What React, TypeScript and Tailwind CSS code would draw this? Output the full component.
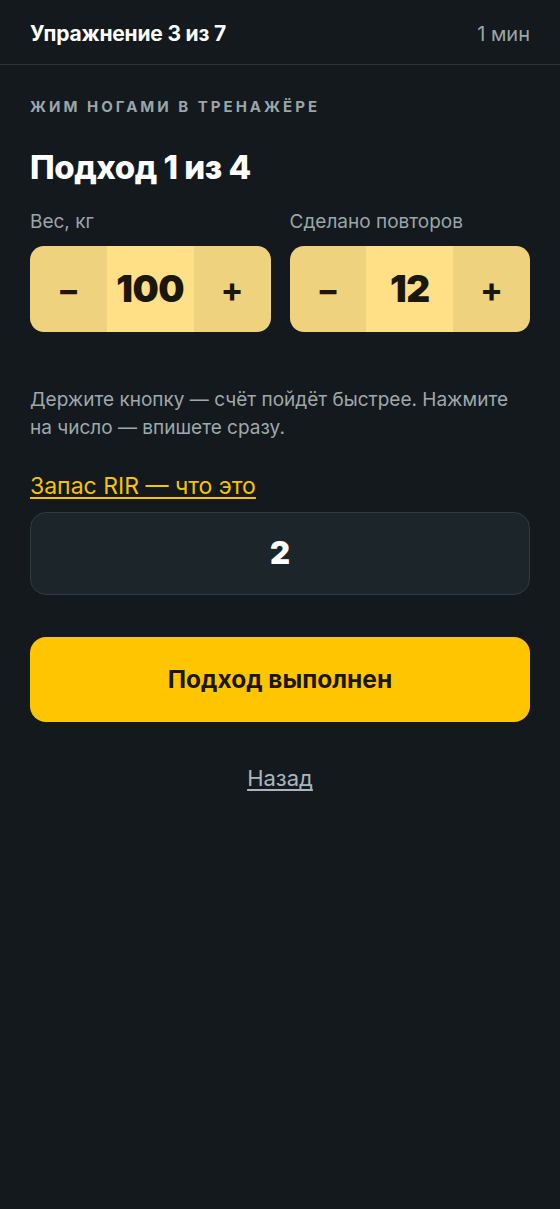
import { useState } from 'react';

const font = { fontFamily: 'Inter, "Noto Sans", sans-serif' };

function Stepper({ label, value, onChange }: { label: string; value: number; onChange: (v: number) => void }) {
  return (
    <div className="flex-1 min-w-0">
      <div className="text-[19px] leading-[24px] text-[#9aa6a9] mb-[12px]">{label}</div>
      <div className="grid grid-cols-[1fr_1.125fr_1fr] h-[86px] rounded-[14px] overflow-hidden text-[#1c170b]">
        <button
          onClick={() => onChange(value - 1)}
          className="bg-[#efd27e] flex items-center justify-center text-[34px] font-bold"
        >
          −
        </button>
        <div className="bg-[#ffe087] flex items-center justify-center text-[37px] font-black tracking-[-0.5px]">
          {value}
        </div>
        <button
          onClick={() => onChange(value + 1)}
          className="bg-[#efd27e] flex items-center justify-center text-[34px] font-bold"
        >
          +
        </button>
      </div>
    </div>
  );
}

export default function App() {
  const [weight, setWeight] = useState(100);
  const [reps, setReps] = useState(12);

  return (
    <div className="min-h-[1209px] bg-[#13191c] text-white" style={font}>
      {/* шапка */}
      <div className="h-[65px] flex items-center justify-between px-[30px] pt-[3px] border-b border-[#2a3538]">
        <span className="text-[21px] font-bold tracking-[-0.2px]">Упражнение 3 из 7</span>
        <span className="text-[20px] text-[#9aa6a9]">1 мин</span>
      </div>

      <div className="px-[30px]">
        <div className="mt-[32px] text-[15px] leading-[20px] font-bold tracking-[3px] text-[#9aa6a9]">
          ЖИМ НОГАМИ В ТРЕНАЖЁРЕ
        </div>
        <h1 className="mt-[30px] text-[33px] leading-[40px] font-extrabold tracking-[-0.5px]">Подход 1 из 4</h1>

        <div className="mt-[23px] flex gap-[19px]">
          <Stepper label="Вес, кг" value={weight} onChange={setWeight} />
          <Stepper label="Сделано повторов" value={reps} onChange={setReps} />
        </div>

        <p className="mt-[54px] text-[19px] leading-[28px] text-[#9ea9ac]">
          Держите кнопку — счёт пойдёт быстрее. Нажмите на число — впишете сразу.
        </p>

        <a href="#" className="block mt-[30px] text-[23px] leading-[28px] text-[#f5c400] underline underline-offset-[3px]">
          Запас RIR — что это
        </a>

        <div className="mt-[12px] h-[83px] rounded-[16px] bg-[#1c252a] border border-[#2f3b40] flex items-center justify-center text-[31px] font-black">
          2
        </div>

        <button className="mt-[42px] w-full h-[85px] rounded-[16px] bg-[#ffc500] text-[#1b1608] text-[24.5px] font-bold">
          Подход выполнен
        </button>

        <div className="mt-[42px] text-center leading-[28px]">
          <a href="#" className="text-[22px] text-[#a9b7bc] underline underline-offset-[3px]">Назад</a>
        </div>
      </div>
    </div>
  );
}
